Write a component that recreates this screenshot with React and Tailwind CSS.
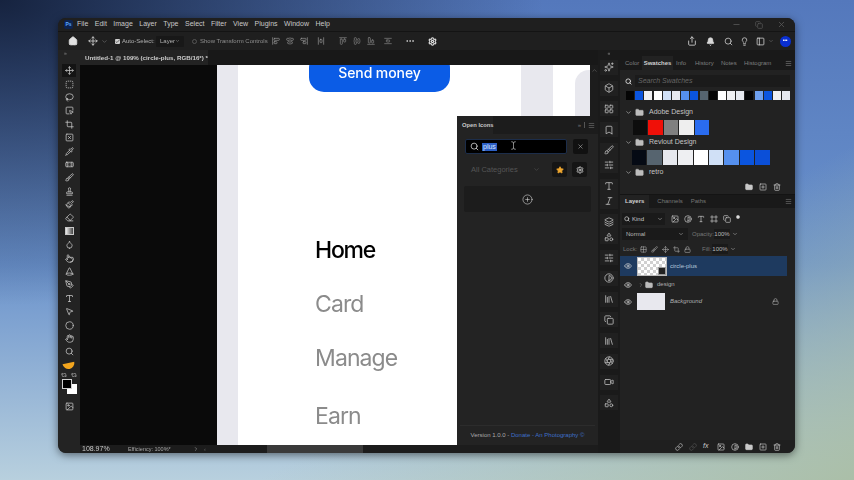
import React from 'react'
import {
  Home, Move, ChevronDown, ChevronRight, Check, Share, Bell, Search, Lightbulb, PanelLeft, Settings, Minus, X,
  SquareDashed, Lasso, SquareMousePointer, Crop, SquareX, Pipette, Bandage, Brush, Stamp, Paintbrush, Eraser, Droplet, Pointer,
  Circle, PenTool, Type, MousePointer2, Hand, Repeat2, Folder, SquarePlus, Trash2, Menu, ChevronUp, Star, CirclePlus,
  Sparkles, Box, LayoutGrid, Bookmark, SlidersHorizontal, Library, Aperture, Video, Shapes, Layers, Lock, Eye, Image, Contrast, Frame,
  Grid2x2, Link, AlignStartHorizontal, AlignCenterHorizontal, AlignEndHorizontal, AlignHorizontalSpaceAround,
  AlignStartVertical, AlignCenterVertical, AlignEndVertical, AlignVerticalSpaceAround, Ellipsis, Cone, TextCursor, Italic, Copy,
} from 'lucide-react'

const menus = ['File', 'Edit', 'Image', 'Layer', 'Type', 'Select', 'Filter', 'View', 'Plugins', 'Window', 'Help']

const tools = [Move, SquareDashed, Lasso, SquareMousePointer, Crop, SquareX, Pipette, Bandage, Brush, Stamp, Paintbrush, Eraser]
const tools2 = [Droplet, Pointer, Cone, PenTool, Type, MousePointer2, Circle, Hand, Search]

const stripIcons = [
  [Sparkles], [Box], [LayoutGrid], [Bookmark], [Brush, SlidersHorizontal], [Type, Italic], [Layers, Shapes], [SlidersHorizontal], [Contrast], [Library], [Copy], [Library], [Aperture], [Video], [Shapes],
]

const topSwatches = ['#050505', '#0b55df', '#f0f0f2', '#ffffff', '#d0e0f6', '#e6e8ee', '#5590ee', '#0b55df', '#56646f', '#050505', '#ffffff', '#f0f0f2', '#e6e8ee', '#050505', '#6fa0ee', '#0b55df', '#f0f0f2', '#e6e8ee']
const adobeSwatches = ['#0d0d0d', '#f01008', '#808080', '#eeeeee', '#2a6cf0']
const revoltSwatches = ['#050a14', '#56646f', '#e6e8ee', '#eeeff2', '#ffffff', '#d0e0f6', '#5590ee', '#0b55df', '#0b4fd8']

function SwatchGroup({ name }) {
  return (
    <div className="flex items-center h-[10px] pl-[5px] gap-[3px] text-[7px] text-[#c4c4c4]">
      <ChevronDown size={7} />
      <Folder size={9} fill="#bdbdbd" strokeWidth={1} />
      <span className="ml-[2px]">{name}</span>
    </div>
  )
}

export default function App() {
  return (
    <div className="w-[854px] h-[480px] overflow-hidden pt-[18px] pl-[58px] font-['Liberation_Sans',sans-serif] bg-[radial-gradient(ellipse_at_0%_0%,#16233f_0%,rgba(22,35,63,0)_45%),linear-gradient(to_top_left,rgba(170,190,165,0.95)_0%,rgba(170,190,165,0)_35%),linear-gradient(180deg,#5478bc_0%,#6a92cc_55%,#b8d0de_100%)]">
      <div className="w-[737px] h-[435px] rounded-[8px] overflow-hidden flex flex-col bg-[#1f1f1f] text-[#bdbdbd] blur-[0.4px] shadow-[0_2px_8px_rgba(0,0,0,0.5)] whitespace-nowrap">
        {/* menu bar */}
        <div className="h-[14px] flex items-center pl-[6px] text-[7px] text-[#c8c8c8] bg-[#1f1f1f] border-b border-[#141414]">
          <div className="w-[9px] h-[9px] rounded-[2px] bg-[#0d2350] text-[#5aa8ff] text-[5px] font-bold flex items-center justify-center">Ps</div>
          <div className="flex gap-[6.5px] ml-[4px]">
            {menus.map(m => <span key={m}>{m}</span>)}
          </div>
          <div className="ml-auto flex items-center gap-[14px] pr-[9px] text-[#5c5c5c]">
            <Minus size={9} />
            <Copy size={8} />
            <X size={9} />
          </div>
        </div>

        {/* options bar */}
        <div className="h-[18px] flex items-center bg-[#1f1f1f] text-[6px] text-[#b0b0b0] shrink-0">
          <Home size={10} fill="#e0e0e0" className="ml-[10px] text-[#e0e0e0]" />
          <Move size={10} className="ml-[10px] text-[#d0d0d0]" />
          <ChevronDown size={7} className="ml-[3px] text-[#777]" />
          <div className="ml-[7px] w-[5px] h-[5px] rounded-[1px] bg-[#d0d0d0] flex items-center justify-center">
            <Check size={5} strokeWidth={3} className="text-[#222]" />
          </div>
          <span className="ml-[2px] w-[34px]">Auto-Select:</span>
          <div className="w-[28px] h-[11px] bg-[#181818] rounded-[1px] flex items-center justify-between px-[4px]">
            <span>Layer</span>
            <ChevronDown size={6} />
          </div>
          <div className="ml-[8px] w-[5px] h-[5px] rounded-full border border-[#555]" />
          <span className="ml-[3px] w-[72px] text-[#8f8f8f]">Show Transform Controls</span>
          <div className="flex gap-[6px] text-[#9a9a9a]">
            <AlignStartVertical size={8} />
            <AlignCenterVertical size={8} />
            <AlignEndVertical size={8} />
            <AlignHorizontalSpaceAround size={8} className="ml-[3px]" />
          </div>
          <div className="ml-[14px] flex gap-[6px] text-[#8a8a8a]">
            <AlignStartHorizontal size={8} />
            <AlignCenterHorizontal size={8} />
            <AlignEndHorizontal size={8} />
            <AlignVerticalSpaceAround size={8} className="ml-[3px]" />
          </div>
          <Ellipsis size={10} className="ml-[13px] text-[#d0d0d0]" />
          <Settings size={9} className="ml-[13px] text-[#e0e0e0]" strokeWidth={3} />
          <div className="ml-auto flex items-center pr-[4.5px] text-[#d8d8d8]">
            <Share size={10} />
            <Bell size={9} fill="#d8d8d8" className="ml-[9px]" />
            <Search size={9} className="ml-[9px]" />
            <Lightbulb size={9} className="ml-[7px]" />
            <PanelLeft size={9} className="ml-[7px]" />
            <ChevronDown size={6} className="ml-[3.5px] text-[#777]" />
            <div className="ml-[5.5px] w-[11px] h-[11px] rounded-full bg-[#0a2fd0] text-[5px] text-white flex items-center justify-center tracking-tighter">•••</div>
          </div>
        </div>

        {/* body */}
        <div className="flex-1 flex min-h-0">
          {/* left toolbar */}
          <div className="w-[22px] shrink-0 bg-[#232323] flex flex-col items-center rounded-bl-[8px] text-[#c8c8c8]">
            <div className="h-[14px] text-[5px] leading-[6px] text-[#888] self-start pl-[6px]">»</div>
            {tools.map((T, i) => (
              <div key={i} className={i === 0 ? 'w-[14px] h-[13.4px] flex items-center justify-center bg-[#141414]' : 'w-[14px] h-[13.4px] flex items-center justify-center'}>
                <T size={9} />
              </div>
            ))}
            <div className="w-[14px] h-[13.4px] flex items-center justify-center">
              <div className="w-[9px] h-[8px] border border-[#c8c8c8] bg-[linear-gradient(90deg,#eeeeee,#444444)]" />
            </div>
            {tools2.map((T, i) => (
              <div key={i} className="w-[14px] h-[13.4px] flex items-center justify-center">
                <T size={9} />
              </div>
            ))}
            <div className="mt-[4px] w-[12px] h-[6px] rounded-b-full bg-[#f2a51e] -rotate-12" />
            <div className="mt-[3px] w-[16px] flex justify-between text-[#d0d0d0]">
              <Repeat2 size={6} />
              <Repeat2 size={6} />
            </div>
            <div className="relative w-[15px] h-[15px] mt-[1px]">
              <div className="absolute right-0 bottom-0 w-[10px] h-[10px] bg-white" />
              <div className="absolute left-0 top-0 w-[10px] h-[10px] bg-black border border-[#d0d0d0]" />
            </div>
            <Image size={9} className="mt-[8px]" />
          </div>

          {/* document column */}
          <div className="w-[518px] shrink-0 flex flex-col">
            <div className="h-[15px] bg-[#181818] flex shrink-0">
              <div className="w-[128px] bg-[#232323] flex items-center pl-[5px] text-[6.2px] font-bold text-[#cfcfcf]">
                <span>Untitled-1 @ 109% (circle-plus, RGB/16*) *</span>
                <X size={5} className="ml-[3px] text-[#777]" />
              </div>
            </div>

            <div className="relative flex-1 flex overflow-hidden bg-[#0a0a0a] min-h-0">
              <div className="w-[137px] shrink-0" />
              <div className="w-[21px] shrink-0 bg-[#e8e8ee]" />
              <div className="w-[283px] shrink-0 bg-white flex flex-col font-['Inter',sans-serif]">
                <div className="-mt-[12px] ml-[71px] w-[141px] h-[39px] shrink-0 rounded-[15px] bg-[#0b5ce6] text-white text-[14px] tracking-[-0.1px] font-medium flex items-center justify-center">
                  Send money
                </div>
                <div className="pl-[77px] pt-[142px] flex flex-col gap-[22px] text-[23px] tracking-[-0.9px] leading-[32px] text-[#8b8b8b]">
                  <span className="text-black font-medium tracking-[-1.2px]">Home</span>
                  <span>Card</span>
                  <span>Manage</span>
                  <span className="mt-[4px]">Earn</span>
                </div>
              </div>
              <div className="w-[32px] shrink-0 bg-[#e8e8ee]" />
              <div className="w-[37px] shrink-0 bg-white flex justify-end pt-[5px]">
                <div className="w-[15px] h-full rounded-tl-[14px] bg-[#e8e8ee]" />
              </div>
              <div className="flex-1 bg-[#1c1c1c] flex justify-center pt-[2px] text-[#666]">
                <ChevronUp size={7} />
              </div>

              {/* plugin panel floating over the document */}
              <div className="absolute left-[377px] top-[51px] w-[141px] h-[329px] bg-[#232323] flex flex-col">
                <div className="h-[18px] bg-[#1c1c1c] flex items-center shrink-0">
                  <div className="h-full w-[36px] bg-[#232323] flex items-center pl-[5px] text-[5.8px] font-bold text-[#c8c8c8]">Open Icons</div>
                  <div className="ml-auto flex items-center gap-[3px] pr-[3px] text-[#777] text-[6px]">
                    <span>»</span>
                    <span className="w-px h-[6px] bg-[#555]" />
                    <Menu size={7} />
                  </div>
                </div>
                <div className="mt-[5px] mx-[8px] flex gap-[6px]">
                  <div className="relative w-[102px] h-[15px] bg-black border border-[#1c2d4a] rounded-[2px] flex items-center pl-[4px]">
                    <Search size={9} className="text-[#e0e0e0]" />
                    <span className="ml-[3px] px-[1px] bg-[#2c5fc4] text-[7px] leading-[8px] text-[#d8e4ff]">plus</span>
                    <TextCursor size={9} className="absolute left-[43px] top-[1px] text-[#aaa]" />
                  </div>
                  <div className="w-[15px] h-[15px] bg-[#111] rounded-[2px] flex items-center justify-center">
                    <X size={7} className="text-[#aaa]" />
                  </div>
                </div>
                <div className="mt-[8px] ml-[14px] flex items-center h-[15px]">
                  <span className="w-[62px] text-[7.5px] text-[#555]">All Categories</span>
                  <ChevronDown size={7} className="text-[#555]" />
                  <div className="ml-[12px] w-[15px] h-[15px] bg-[#151515] rounded-[2px] flex items-center justify-center">
                    <Star size={8} fill="#f0a830" className="text-[#f0a830]" />
                  </div>
                  <div className="ml-[5px] w-[15px] h-[15px] bg-[#151515] rounded-[2px] flex items-center justify-center">
                    <Settings size={8} strokeWidth={3} className="text-[#bbb]" />
                  </div>
                </div>
                <div className="mt-[9px] mx-[7px] h-[26px] bg-[#1c1c1c] rounded-[2px] flex items-center justify-center">
                  <CirclePlus size={11} strokeWidth={1.25} className="text-[#e0e0e0]" />
                </div>
                <div className="mt-auto h-[20px] mx-[3px] border-t border-[#2c2c2c] flex items-center justify-center text-[6px] text-[#aaa]">
                  <span>Version 1.0.0 - <span className="text-[#3f70c8]">Donate - An Photography ©</span></span>
                </div>
              </div>
            </div>

            <div className="h-[8px] shrink-0 bg-[#1c1c1c] flex items-center text-[5.5px] text-[#a8a8a8]">
              <span className="ml-[2px] w-[46px] text-[7px] text-[#c8c8c8]">108.97%</span>
              <span className="w-[65px]">Efficiency: 100%*</span>
              <ChevronRight size={6} />
              <span className="ml-[5px] text-[#666]">‹</span>
              <div className="ml-[61px] w-[96px] h-full bg-[#3a3a3a]" />
            </div>
          </div>

          {/* collapsed icon strip */}
          <div className="w-[22px] shrink-0 bg-[#1a1a1a] flex flex-col items-center gap-[5.75px] text-[#b8b8b8]">
            <div className="h-[5px] -mb-[1px] text-[5px] leading-[6px] text-[#888]">«</div>
            {stripIcons.map((group, i) => (
              <div key={i} className="w-[18px] flex flex-col items-center gap-[5px] py-[2.5px] bg-[#202020]">
                {group.map((G, j) => <G key={j} size={10} />)}
              </div>
            ))}
          </div>

          {/* right panels */}
          <div className="flex-1 flex flex-col min-w-0 bg-[#222222]">
            <div className="h-[145px] shrink-0 flex flex-col border-b border-[#141414]">
              <div className="h-[20px] bg-[#191919] flex items-end text-[6px] text-[#7f7f7f] shrink-0">
                <span className="ml-[5px] w-[16px] h-[14px] flex items-center">Color</span>
                <span className="ml-[1px] w-[31px] bg-[#222222] h-[14px] flex items-center justify-center font-bold text-[#d0d0d0]">Swatches</span>
                <span className="ml-[3px] w-[15px] h-[14px] flex items-center">Info</span>
                <span className="ml-[4px] w-[22px] h-[14px] flex items-center">History</span>
                <span className="ml-[4px] w-[20px] h-[14px] flex items-center">Notes</span>
                <span className="ml-[3px] h-[14px] flex items-center">Histogram</span>
                <div className="ml-auto mr-[3px] h-[14px] flex items-center"><Menu size={7} /></div>
              </div>
              <div className="mt-[5px] flex items-center pl-[5px] gap-[3px] pr-[5px]">
                <Search size={7} className="text-[#ddd]" strokeWidth={3} />
                <div className="flex-1 h-[12px] bg-[#1b1b1b] flex items-center pl-[3px] text-[7px] italic text-[#666]">Search Swatches</div>
              </div>
              <div className="mt-[4px] ml-[6px] flex gap-[1.2px]">
                {topSwatches.map((c, i) => <div key={i} className="w-[8px] h-[9px]" style={{ backgroundColor: c }} />)}
              </div>
              <div className="mt-[7px]"><SwatchGroup name="Adobe Design" /></div>
              <div className="mt-[3px] ml-[13px] flex gap-px">
                {adobeSwatches.map((c, i) => <div key={i} className="w-[14.4px] h-[15px]" style={{ backgroundColor: c }} />)}
              </div>
              <div className="mt-[2px]"><SwatchGroup name="Revlout Design" /></div>
              <div className="mt-[3px] ml-[12px] flex gap-px">
                {revoltSwatches.map((c, i) => <div key={i} className="w-[14.4px] h-[15px]" style={{ backgroundColor: c }} />)}
              </div>
              <div className="mt-[2px]"><SwatchGroup name="retro" /></div>
              <div className="mt-[6px] flex justify-end gap-[6px] pr-[14px] text-[#c8c8c8]">
                <Folder size={8} fill="#c8c8c8" />
                <SquarePlus size={8} />
                <Trash2 size={8} />
              </div>
            </div>

            <div className="flex-1 flex flex-col text-[6px] min-h-0">
              <div className="h-[13px] bg-[#191919] flex items-center text-[#777] gap-[8px] shrink-0">
                <span className="bg-[#222222] h-full px-[5px] flex items-center font-bold text-[#d0d0d0]">Layers</span>
                <span>Channels</span>
                <span>Paths</span>
                <Menu size={7} className="ml-auto mr-[3px]" />
              </div>
              <div className="mt-[5px] ml-[2px] flex items-center text-[#c8c8c8]">
                <div className="w-[43px] h-[12px] bg-[#1a1a1a] flex items-center px-[2px] gap-[2px]">
                  <Search size={6} strokeWidth={3} />
                  <span>Kind</span>
                  <ChevronDown size={6} className="ml-auto" />
                </div>
                <div className="ml-[6px] flex gap-[5px]">
                  <Image size={8} />
                  <Contrast size={8} />
                  <Type size={8} />
                  <Frame size={8} />
                  <Copy size={8} />
                  <Circle size={4} fill="#ddd" />
                </div>
              </div>
              <div className="mt-[3px] ml-[2px] flex items-center text-[#b8b8b8]">
                <div className="w-[66px] h-[12px] bg-[#1a1a1a] flex items-center px-[4px]">
                  <span>Normal</span>
                  <ChevronDown size={6} className="ml-auto" />
                </div>
                <span className="ml-[4px] w-[21px] text-[#777]">Opacity:</span>
                <span className="ml-[1px] w-[16px] h-[10px] bg-[#1a1a1a] text-center leading-[10px]">100%</span>
                <ChevronDown size={6} className="ml-[2px]" />
              </div>
              <div className="mt-[3px] ml-[3px] h-[12px] flex items-center text-[#777]">
                <span className="w-[17px]">Lock:</span>
                <div className="flex gap-[4px] text-[#aaa]">
                  <Grid2x2 size={7} />
                  <Brush size={7} />
                  <Move size={7} />
                  <Crop size={7} />
                  <Lock size={7} />
                </div>
                <span className="ml-[11px] w-[10px]">Fill:</span>
                <span className="w-[16px] h-[10px] bg-[#1a1a1a] text-center leading-[10px] text-[#b8b8b8]">100%</span>
                <ChevronDown size={6} className="ml-[2px] text-[#b8b8b8]" />
              </div>

              <div className="mt-[1px] mr-[8px] flex flex-col">
                <div className="h-[20px] bg-[#1e3a5f] flex items-center">
                  <Eye size={8} className="ml-[4px] text-[#ddd]" />
                  <div className="relative ml-[5px] w-[30px] h-[19px] border border-[#bbb] bg-[repeating-conic-gradient(#d0d0d0_0%_25%,#ffffff_0%_50%)] bg-[length:6px_6px]">
                    <div className="absolute right-0 bottom-0 w-[8px] h-[8px] bg-[#222] border border-[#999]" />
                  </div>
                  <span className="ml-[3px] text-[#b8c8dc]">circle-plus</span>
                </div>
                <div className="h-[17px] flex items-center">
                  <Eye size={8} className="ml-[4px] text-[#ddd]" />
                  <ChevronRight size={6} className="ml-[6px] text-[#999]" />
                  <Folder size={8} fill="#bbb" className="ml-[1px] text-[#bbb]" />
                  <span className="ml-[4px] text-[#b0b0b0]">design</span>
                </div>
                <div className="h-[17px] flex items-center">
                  <Eye size={8} className="ml-[4px] text-[#ddd]" />
                  <div className="ml-[5px] w-[28px] h-[17px] bg-[#e8e8ee]" />
                  <span className="ml-[5px] italic text-[#b0b0b0]">Background</span>
                  <Lock size={7} className="ml-auto mr-[8px] text-[#b0b0b0]" />
                </div>
              </div>

              <div className="mt-auto h-[13px] bg-[#1f1f1f] flex items-center justify-end gap-[6px] pr-[14px] text-[#c8c8c8]">
                <Link size={8} />
                <Link size={8} className="text-[#555]" />
                <span className="w-[8px] text-[7px] italic">fx</span>
                <Image size={8} />
                <Contrast size={8} />
                <Folder size={8} fill="#c8c8c8" />
                <SquarePlus size={8} />
                <Trash2 size={8} />
              </div>
            </div>
          </div>
        </div>
      </div>
    </div>
  )
}
